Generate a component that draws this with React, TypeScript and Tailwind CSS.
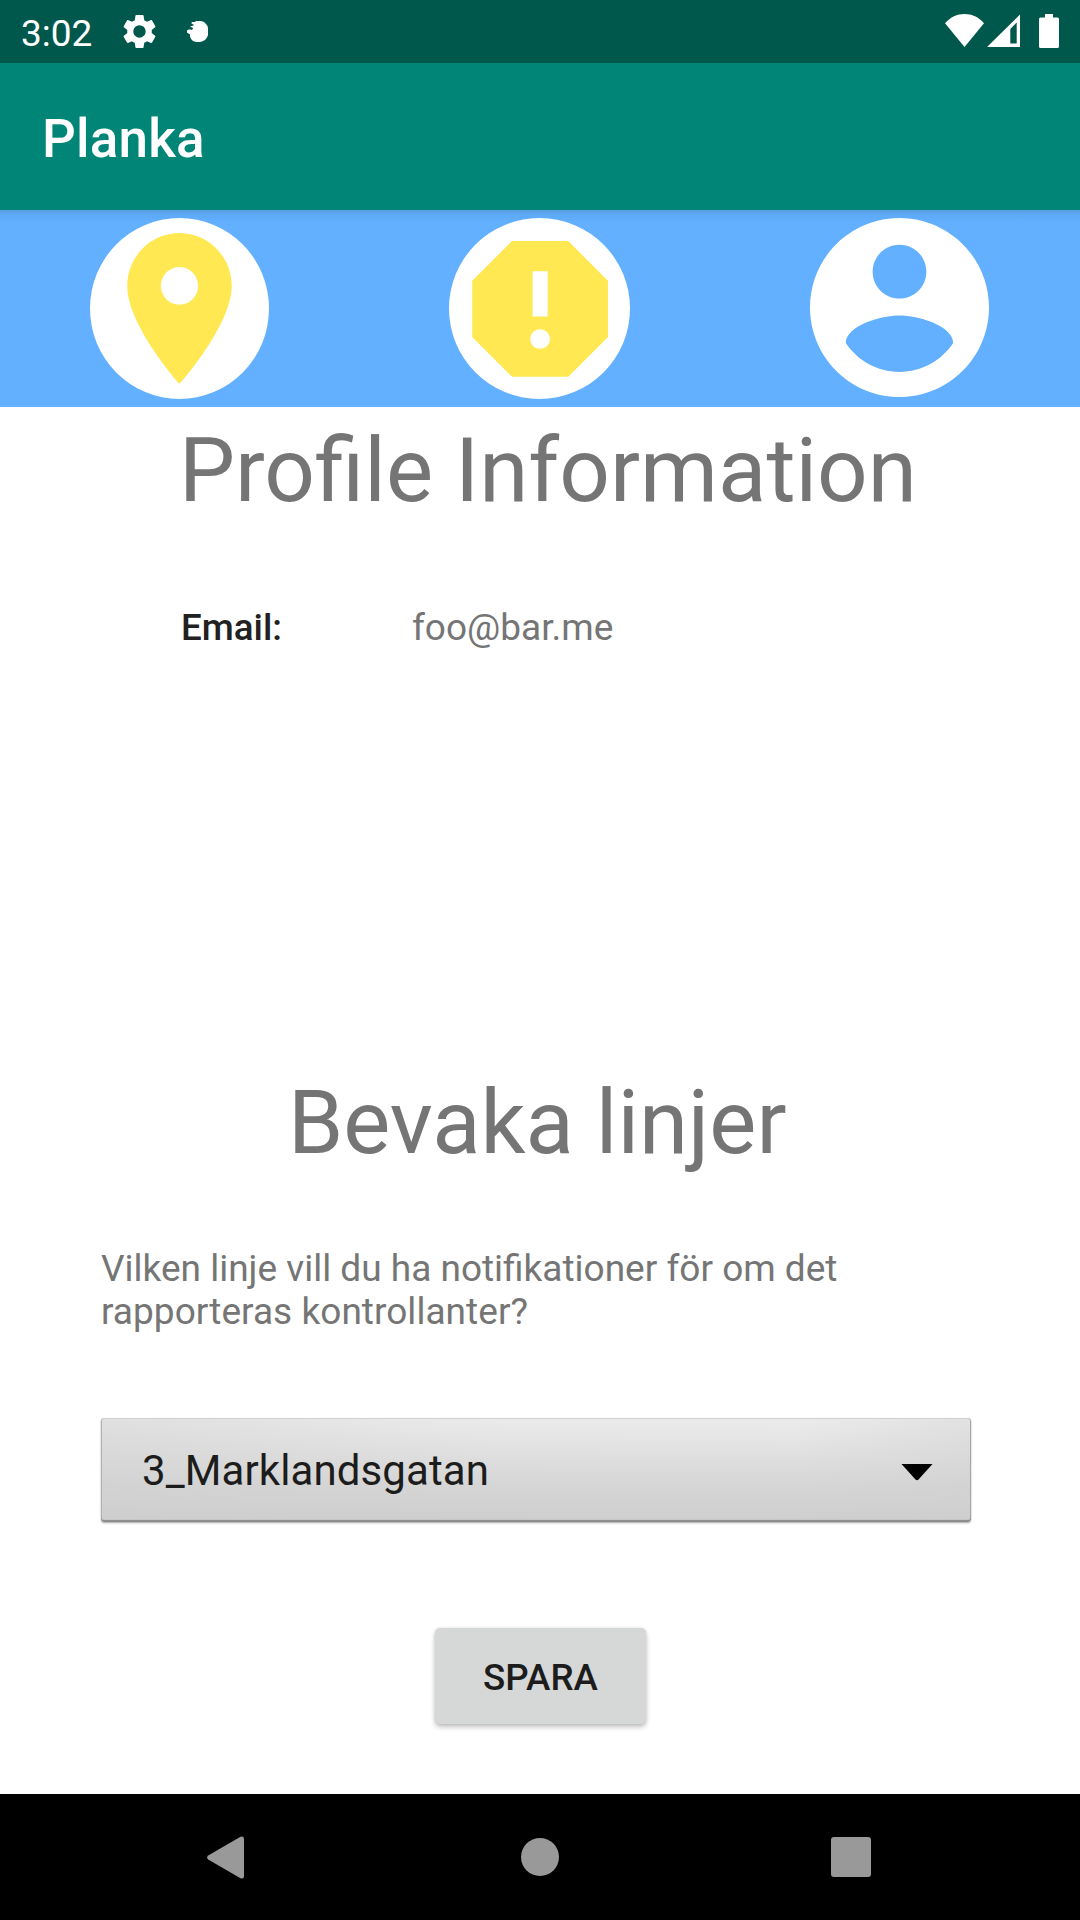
import React from "react";

const GEAR =
  "M19.14,12.94c0.04-0.3,0.06-0.61,0.06-0.94c0-0.32-0.02-0.64-0.07-0.94l2.03-1.58c0.18-0.14,0.23-0.41,0.12-0.61l-1.92-3.32c-0.12-0.22-0.37-0.29-0.59-0.22l-2.39,0.96c-0.5-0.38-1.03-0.7-1.62-0.94L14.4,2.81c-0.04-0.24-0.24-0.41-0.48-0.41h-3.84c-0.24,0-0.43,0.17-0.47,0.41L9.25,5.35C8.66,5.59,8.12,5.92,7.63,6.29L5.24,5.33c-0.22-0.08-0.47,0-0.59,0.22L2.74,8.87C2.62,9.08,2.66,9.34,2.86,9.48l2.03,1.58C4.84,11.36,4.8,11.69,4.8,12s0.02,0.64,0.07,0.94l-2.03,1.58c-0.18,0.14-0.23,0.41-0.12,0.61l1.92,3.32c0.12,0.22,0.37,0.29,0.59,0.22l2.39-0.96c0.5,0.38,1.03,0.7,1.62,0.94l0.36,2.54c0.05,0.24,0.24,0.41,0.48,0.41h3.84c0.24,0,0.44-0.17,0.47-0.41l0.36-2.54c0.59-0.24,1.13-0.56,1.62-0.94l2.39,0.96c0.22,0.08,0.47,0,0.59-0.22l1.92-3.32c0.12-0.22,0.07-0.47-0.12-0.61L19.14,12.94z M12,15.6c-1.98,0-3.6-1.62-3.6-3.6s1.62-3.6,3.6-3.6s3.6,1.62,3.6,3.6S13.98,15.6,12,15.6z";

function StatusBar() {
  return (
    <div className="flex h-[63px] items-center justify-between bg-[#00574b] pl-[21px] pr-[21px] text-white">
      <div className="flex h-full items-center">
        <span className="w-[98px] pt-[3px] text-[37px] leading-[43px]">3:02</span>
        <svg className="h-[41px] w-[41px]" viewBox="0 0 24 24" fill="currentColor">
          <path d={GEAR} />
        </svg>
        <svg className="ml-[27px] h-[21px] w-[21px]" viewBox="0 0 21 21" fill="currentColor">
          <path d="M5.500 1H8L9 0H14L17 1L19 3L20.500 5L21 7V14L20 16.500L18 19L15 20.500L13 21H9L6 20L4 18L3 15.500V13.500L1.500 12.500L0 11.500V9.500L1.500 8.500H3.500L4.500 9L6 8L5.500 6.500L3.500 6V5H5L7 4L5.500 3L4 2Z" />
        </svg>
      </div>
      <div className="flex h-full items-start pt-[14px]">
        <svg className="h-[33px] w-[39px]" viewBox="0 0 39 33" fill="currentColor">
          <path d="M0 9.2C5.5 3 12 0 19.5 0S33.500 3 39 9.200L19.500 33Z" />
        </svg>
        <svg className="ml-[3px] h-[33px] w-[33px]" viewBox="0 0 33 33" fill="currentColor">
          <path fillRule="evenodd" d="M33 0.500V33H0ZM29.700 8.500L23.300 15V29.500H29.700Z" />
        </svg>
        <svg className="ml-[19px] h-[34px] w-[20px]" viewBox="0 0 20 34" fill="currentColor">
          <path d="M6 0H14V3.500H18.500Q20 3.500 20 5V32.500Q20 34 18.500 34H1.500Q0 34 0 32.500V5Q0 3.500 1.500 3.500H6Z" />
        </svg>
      </div>
    </div>
  );
}

function IconBar() {
  return (
    <nav className="grid h-[197px] grid-cols-3 justify-items-center bg-[#62b0ff] bg-[linear-gradient(to_bottom,#589edf_0px,#5da8f3_4px,#61aefd_10px,#62b0ff_15px)] pr-px pt-[8px]">
      <button aria-label="Map" className="h-[181px] w-[179px]">
        <svg className="h-full w-full" viewBox="0 0 24 24" preserveAspectRatio="none">
          <circle cx="12" cy="12" r="12" fill="#fff" />
          <path
            fill="#ffe852"
            d="M12 2C8.130 2 5 5.130 5 9c0 5.250 7 13 7 13s7-7.750 7-13c0-3.870-3.130-7-7-7zm0 9.500a2.500 2.500 0 1 1 0-5 2.500 2.500 0 0 1 0 5z"
          />
        </svg>
      </button>
      <button aria-label="Report" className="h-[181px] w-[181px]">
        <svg className="h-full w-full" viewBox="0 0 24 24">
          <circle cx="12" cy="12" r="12" fill="#fff" />
          <path
            fill="#ffe852"
            transform="translate(0.08 0.05)"
            d="M15.730 3H8.270L3 8.270v7.460L8.270 21h7.460L21 15.730V8.270L15.730 3zM12 17.300c-.72 0-1.300-.58-1.300-1.300 0-.72.58-1.300 1.300-1.300.72 0 1.300.58 1.300 1.300 0 .72-.58 1.300-1.300 1.300zm1-4.300h-2V7h2v6z"
          />
        </svg>
      </button>
      <button aria-label="Profile" className="h-[179px] w-[179px]">
        <svg className="h-full w-full" viewBox="2 2 20 20" fill="#fff">
          <path d="M12 2C6.480 2 2 6.480 2 12s4.480 10 10 10 10-4.480 10-10S17.520 2 12 2zm0 3c1.660 0 3 1.340 3 3s-1.340 3-3 3-3-1.340-3-3 1.340-3 3-3zm0 14.200c-2.500 0-4.710-1.280-6-3.220.03-1.990 4-3.080 6-3.080 1.990 0 5.970 1.090 6 3.080-1.290 1.940-3.500 3.220-6 3.220z" />
        </svg>
      </button>
    </nav>
  );
}

function NavBar() {
  return (
    <footer className="flex h-[126px] items-center bg-black pl-[207px] text-[#999]">
      <svg className="h-[43px] w-[38px]" viewBox="0 0 38 43" fill="currentColor">
        <path d="M1.200 19.500L33.500 0.800Q37 -0.500 37 3V40Q37 43.500 33.500 42.200L1.200 23.500Q-1 21.500 1.200 19.500Z" />
      </svg>
      <div className="ml-[276px] h-[38px] w-[38px] rounded-full bg-[#999]" />
      <div className="ml-[272px] h-[40px] w-[40px] rounded-[3px] bg-[#999]" />
    </footer>
  );
}

export default function App() {
  return (
    <div className="flex h-[1920px] w-[1080px] flex-col overflow-hidden bg-white font-['Roboto',sans-serif] text-[#757575]">
      <StatusBar />
      <header className="flex h-[147px] items-center bg-[#008577] pl-[42px] pt-[4px]">
        <h1 className="text-[53px] font-medium leading-[62px] tracking-[0.2px] text-white">Planka</h1>
      </header>
      <IconBar />
      <main className="flex flex-1 flex-col">
        <h2 className="ml-[179px] mt-[12px] whitespace-nowrap text-[88.900px] leading-[105px]">Profile Information</h2>
        <div className="ml-[181px] mt-[82px] flex text-[37px] leading-[43px]">
          <span className="w-[231px] text-[36.750px] font-medium text-[#212121]">Email:</span>
          <span>foo@bar.me</span>
        </div>
        <h2 className="ml-[288px] mt-[422px] whitespace-nowrap text-[88.800px] leading-[105px]">Bevaka linjer</h2>
        <p className="ml-[101px] mt-[71px] whitespace-nowrap text-[37px] leading-[43px]">
          Vilken linje vill du ha notifikationer för om det
          <br />
          <span className="tracking-[0.040px]">rapporteras kontrollanter?</span>
        </p>
        <button className="ml-[101px] mt-[85px] flex h-[104px] w-[870px] items-center justify-between rounded-[3px] bg-[linear-gradient(to_bottom,rgba(206,206,206,0)_0%,rgba(206,206,206,0.75)_65%,#cecece_100%),linear-gradient(to_right,#e0e0e0_0%,#ebebeb_45%,#ececec_80%,#e2e2e2_100%)] pl-[41px] pr-[38px] text-[42px] text-[#1c1c1c] shadow-[inset_0_-2px_1px_#8a8a8a,inset_1px_0_0_#b5b5b5,inset_-1px_0_0_#a8a8a8,inset_0_1px_0_#d2d2d2,0_1px_2px_rgba(0,0,0,0.35)]">
          <span className="pt-px leading-[49px] tracking-[0.1px]">3_Marklandsgatan</span>
          <svg className="mt-[5px] h-[17px] w-[32px]" viewBox="0 0 32 17">
            <path d="M0.500 0H31.500L17.500 15.500Q16 17 14.500 15.500Z" fill="#000" />
          </svg>
        </button>
        <button className="ml-[435px] mt-[106px] flex h-[96px] w-[211px] items-center justify-center rounded-[5px] bg-[#d6d7d7] pt-[2px] text-[36.750px] font-medium leading-[43px] text-[#1c1c1c] shadow-[0_3px_5px_rgba(0,0,0,0.24),0_0_3px_rgba(0,0,0,0.1)]">
          SPARA
        </button>
      </main>
      <NavBar />
    </div>
  );
}
